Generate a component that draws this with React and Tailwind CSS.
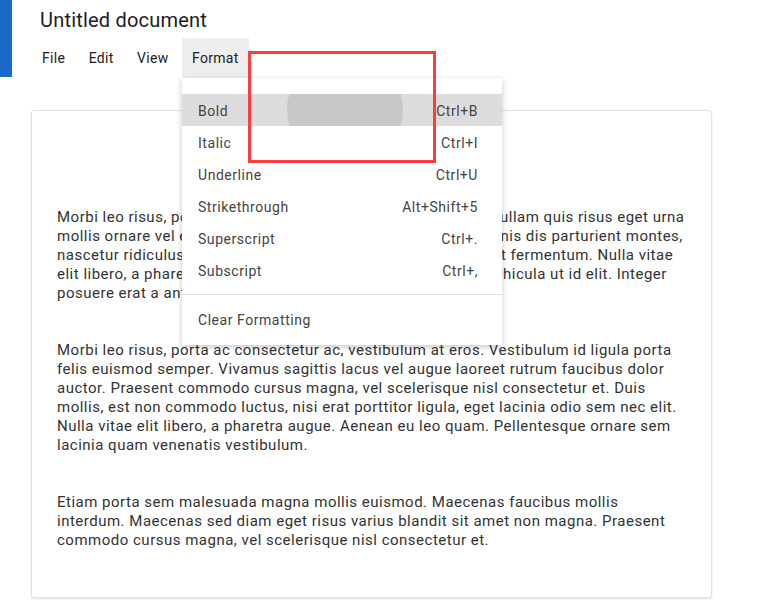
const menuItems = [
  { label: 'Bold', shortcut: 'Ctrl+B', active: true },
  { label: 'Italic', shortcut: 'Ctrl+I' },
  { label: 'Underline', shortcut: 'Ctrl+U' },
  { label: 'Strikethrough', shortcut: 'Alt+Shift+5' },
  { label: 'Superscript', shortcut: 'Ctrl+.' },
  { label: 'Subscript', shortcut: 'Ctrl+,' },
];

const paragraphs = [
  'Morbi leo risus, porta ac consectetur ac, vestibulum at eros. Nullam quis risus eget urna mollis ornare vel eu leo. Cum sociis natoque penatibus et magnis dis parturient montes, nascetur ridiculus mus. Cras mattis consectetur purus sit amet fermentum. Nulla vitae elit libero, a pharetra augue. Nullam id dolor id nibh ultricies vehicula ut id elit. Integer posuere erat a ante venenatis dapibus posuere velit aliquet.',
  'Morbi leo risus, porta ac consectetur ac, vestibulum at eros. Vestibulum id ligula porta felis euismod semper. Vivamus sagittis lacus vel augue laoreet rutrum faucibus dolor auctor. Praesent commodo cursus magna, vel scelerisque nisl consectetur et. Duis mollis, est non commodo luctus, nisi erat porttitor ligula, eget lacinia odio sem nec elit. Nulla vitae elit libero, a pharetra augue. Aenean eu leo quam. Pellentesque ornare sem lacinia quam venenatis vestibulum.',
  'Etiam porta sem malesuada magna mollis euismod. Maecenas faucibus mollis interdum. Maecenas sed diam eget risus varius blandit sit amet non magna. Praesent commodo cursus magna, vel scelerisque nisl consectetur et.',
];

export default function App() {
  return (
    <div className="relative h-[604px] w-[760px] overflow-hidden bg-white font-['Roboto',sans-serif] text-[#212121]">
      <header className="flex h-[78px]">
        <div className="h-[77px] w-[12px] bg-[#1a6bc8]" />
        <div className="flex flex-col pl-[28px]">
          <h1 className="h-[38px] pt-[6px] text-[20px] leading-[28px] font-normal tracking-[0.2px] text-[#202020]">
            Untitled document
          </h1>
          <nav className="-ml-[8px] flex gap-[3.5px] text-[14px] tracking-[0.3px] text-[#222]">
            {['File', 'Edit', 'View', 'Format'].map((m) => (
              <div
                key={m}
                className={`flex h-[40px] items-center px-[10px] ${m === 'Format' ? 'bg-[#eeeeee]' : ''}`}
              >
                {m}
              </div>
            ))}
          </nav>
        </div>
      </header>

      <main className="ml-[31px] mt-[32px] h-[488px] w-[681px] rounded-[3px] border border-[#e2e2e2] bg-white px-[25px] pt-[97px] shadow-[0_1px_2px_rgba(0,0,0,0.12)]">
        <div className="flex flex-col gap-[38px] text-[15px] leading-[19px] tracking-[0.5px] text-[#333]">
          {paragraphs.map((p, i) => (
            <p key={i}>{p}</p>
          ))}
        </div>
      </main>

      <div className="absolute left-[182px] top-[78px] w-[320px] bg-white pt-[16px] pb-[10px] text-[14px] tracking-[0.55px] text-[#444] shadow-[0_2px_6px_rgba(0,0,0,0.22)]">
        {menuItems.map((item) => (
          <div
            key={item.label}
            className={`relative flex h-[32px] items-center justify-between overflow-hidden pt-[3px] pl-[16px] pr-[24px] ${item.active ? 'bg-[#dddddd]' : ''}`}
          >
            {item.active && (
              <div className="absolute left-[105px] top-[-42px] h-[116px] w-[116px] rounded-full bg-[#c8c8c8]" />
            )}
            <span className="relative">{item.label}</span>
            <span className="relative">{item.shortcut}</span>
          </div>
        ))}
        <div className="mt-[8px] mb-[8px] h-px bg-[#e0e0e0]" />
        <div className="flex h-[32px] items-center pt-[3px] pl-[16px]">Clear Formatting</div>
      </div>

      <div className="absolute left-[248px] top-[51px] h-[112px] w-[188px] border-[3px] border-[#ff3b3b]" />
    </div>
  );
}
